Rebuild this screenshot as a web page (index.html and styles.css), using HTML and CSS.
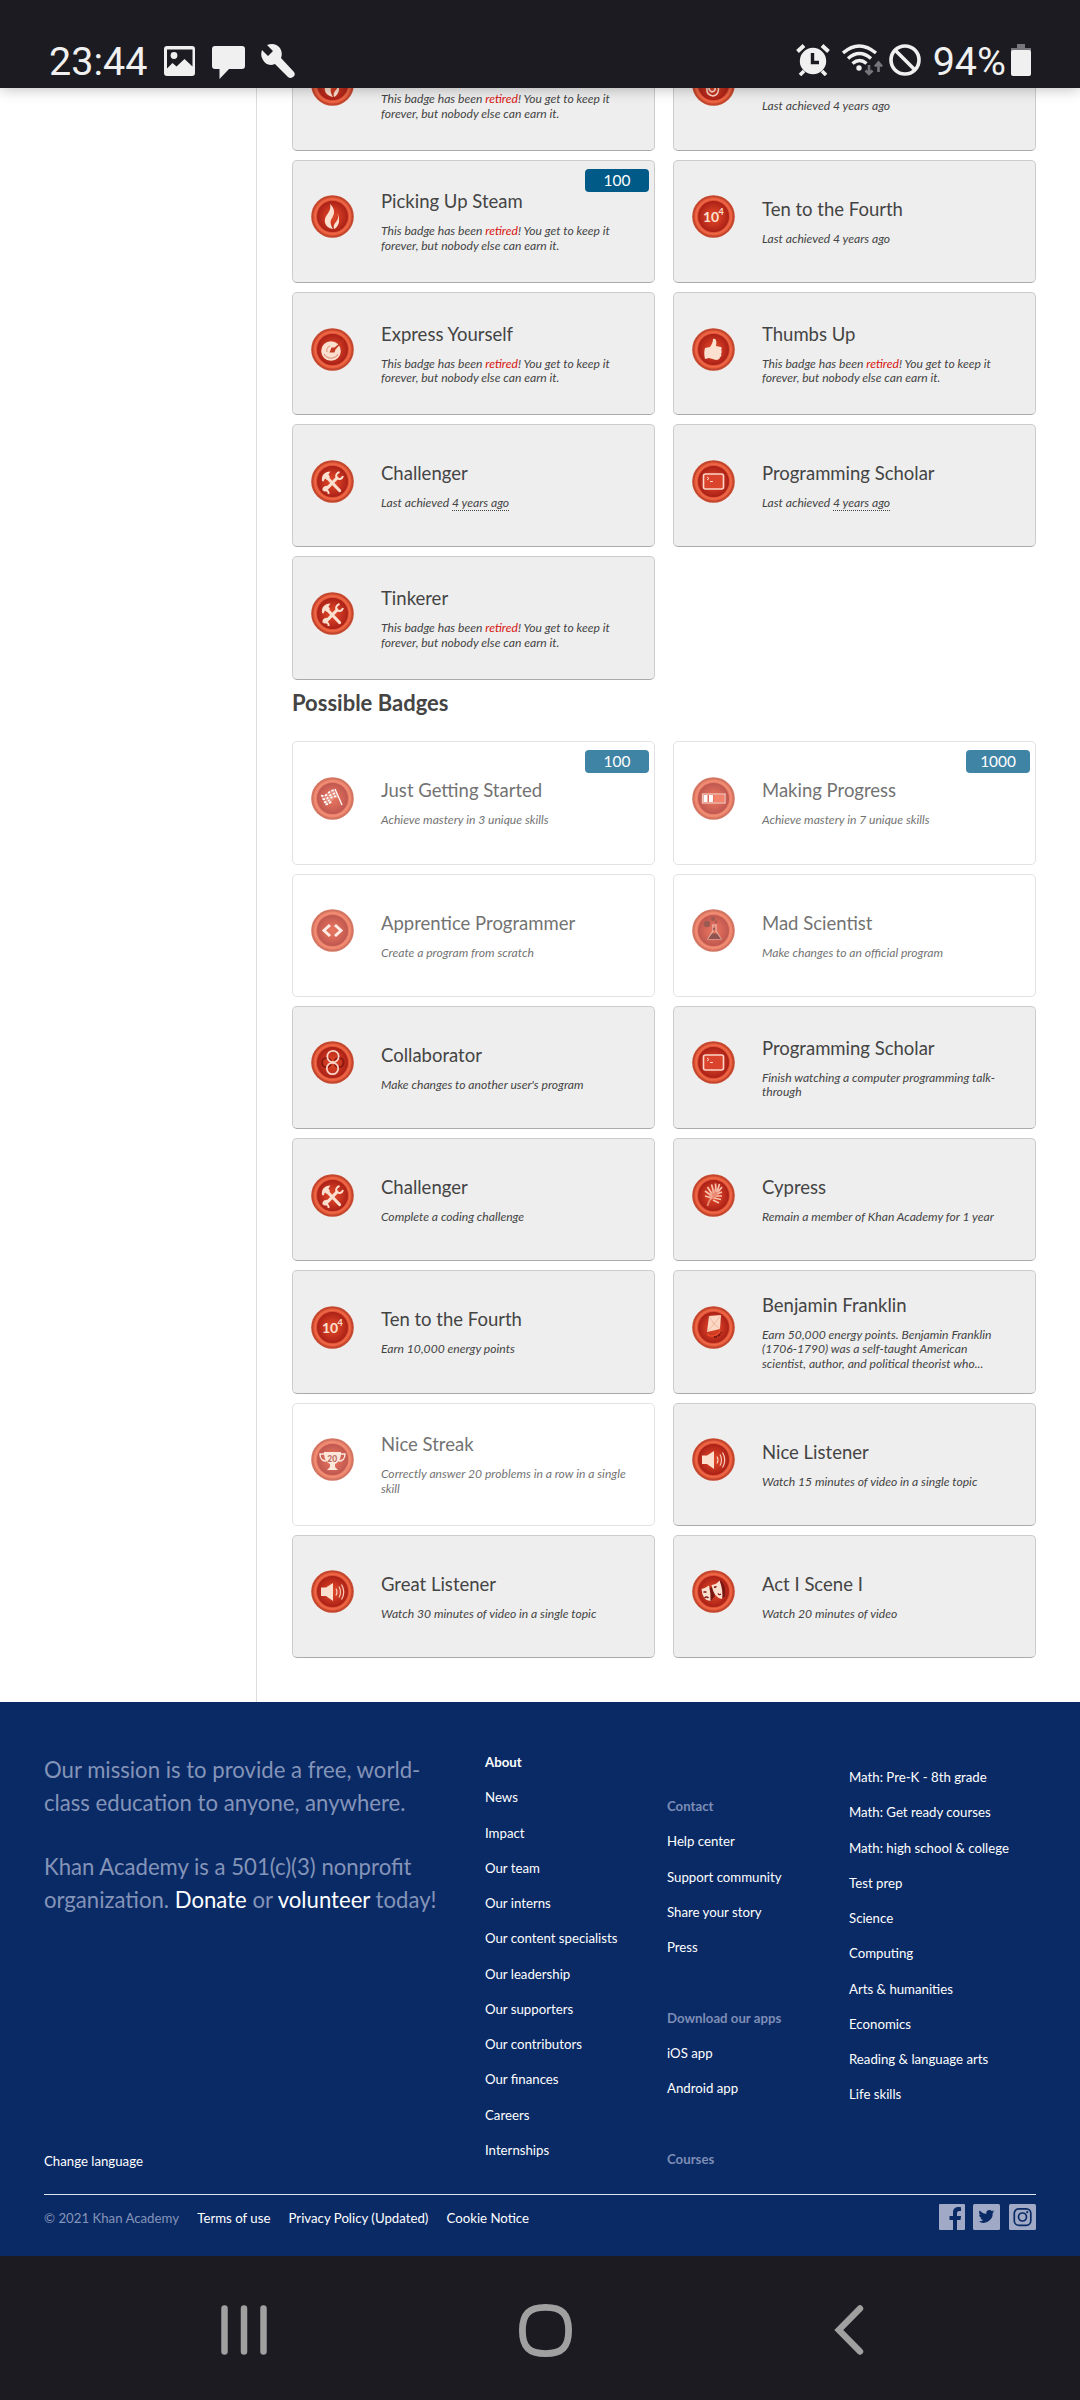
FILE: index.html
```html
<!DOCTYPE html>
<html lang="en">
<head>
<meta charset="utf-8">
<title>Badges | Khan Academy</title>
<link rel="stylesheet" href="styles.css">
</head>
<body>
<svg class="defs" width="0" height="0" aria-hidden="true">
  <defs>
    <radialGradient id="core"><stop offset="0" stop-color="#e04a2a"/><stop offset=".5" stop-color="#cc3721"/><stop offset="1" stop-color="#ab2117"/></radialGradient>
    <radialGradient id="ring"><stop offset=".72" stop-color="#d14328"/><stop offset=".8" stop-color="#ef6848"/><stop offset=".87" stop-color="#e85b3b"/><stop offset=".92" stop-color="#c0452c"/><stop offset="1" stop-color="#c94a30"/></radialGradient>
  </defs>
  <symbol id="medal" viewBox="0 0 43 43"><circle cx="21.5" cy="21.5" r="21.3" fill="url(#ring)"/><circle cx="21.5" cy="21.5" r="15.4" fill="url(#core)"/></symbol>
  <symbol id="flame" viewBox="0 0 43 43"><path d="M19 9c5 5 5 9 2 14-2 3-2 6 1 11-6-1-9-5-8-10 1-5 7-8 5-15z"/><path d="M26 18c2 4 1 6-1 9-2 2-3 4-2 7 3-1 5-5 5-8 0-3 0-5-2-8z"/></symbol>
  <symbol id="gauge" viewBox="0 0 43 43"><circle cx="20" cy="23" r="9.8"/><path d="M13 26a8 8 0 0 0 14 0M19 18a5 5 0 0 0-3 6" fill="none" stroke="#e09b84" stroke-width="1.2"/><path d="M18.500 24.500l2-5 3 0 11-9-10 11-1 3z" fill="#c43a22"/></symbol>
  <symbol id="thumb" viewBox="0 0 43 43"><path d="M13 20l5-1c2-3 3-5 3-8 3-1 4 2 3 7l5 1c1 1 1 2 0 3 1 1 1 2 0 4 1 1 0 3-1 3 0 2-2 3-4 3l-7-2-4 1c-1-4-1-8 0-11z"/></symbol>
  <symbol id="tools" viewBox="0 0 43 43"><path d="M17 18.500L28.500 30.500M26 18L15 29.500" fill="none" stroke="#fbe0cf" stroke-width="3.200" stroke-linecap="round"/><path d="M11 21c-.5-6 2-9 8.500-9.500l-2 3 1.500 2.500-3 3-2-1.500-1.500 3z"/><path d="M28.500 12c-3 1-4 3.500-3 5.500 2 2.500 5.500 2 6.500-1.500M12.500 30.500c4-1 5.500 1 5 3.500M12.500 30.500c-.5-3 3-5 5.500-3" fill="none" stroke="#fbe0cf" stroke-width="2"/></symbol>
  <symbol id="screen" viewBox="0 0 43 43"><rect x="11.500" y="14" width="20" height="15" rx="2" fill="#db442c" stroke="#fbd5c8" stroke-width="1.600"/><path d="M15 17l2 1.500-2 1.500M18 21.500h3" fill="none" stroke="#fbd5c8" stroke-width="1"/></symbol>
  <symbol id="flag" viewBox="0 0 43 43"><path d="M24 12l7 16" fill="none" stroke="#fff" stroke-width="1.300"/><path d="M9.500 17.500q4 2 7-2t7-3.500l4 9q-4-1-6.500 3t-7 4z" fill="#fff" fill-opacity=".2"/><path d="M10 18.500q4 1.500 7-2t7-3M11.500 22q4 1 6.500-2.500t7.500-3M13 25q4 .5 6-3t7-2.500M14.500 27.500q4-.5 6-3.500" fill="none" stroke="#fff" stroke-width="1.700" stroke-dasharray="2.400 1.600"/></symbol>
  <symbol id="progress" viewBox="0 0 43 43"><rect x="10.500" y="17" width="22.500" height="9" fill="none" stroke="#f0b0a0" stroke-width="1.300"/><path d="M11.500 18h4v7h-4zM17 18h4v7h-4z" fill="#fff"/><path d="M22 18h10v7H22z" fill="#f05a3a"/></symbol>
  <symbol id="code" viewBox="0 0 43 43"><path d="M19 16l-6 5.500 6 5.500M24 16l6 5.500-6 5.500" fill="none" stroke="#ffe6dc" stroke-width="3"/></symbol>
  <symbol id="flask" viewBox="0 0 43 43"><path d="M20 16h5M21 16v6l-5 8h13l-5-8v-6" fill="none" stroke="#e4a294" stroke-width="1.200"/><path d="M20 24.500h5l4 5.500H16z" fill="#6c1c16"/><g fill="#7c241a"><circle cx="15" cy="15" r="3.300"/><circle cx="21" cy="10" r="2"/><circle cx="24" cy="13" r="1.200"/><circle cx="22" cy="20" r="1.200"/></g></symbol>
  <symbol id="rings" viewBox="0 0 43 43"><g fill="none"><circle cx="15.500" cy="21.500" r="4.600" stroke="#87170f" stroke-width="1.800"/><circle cx="28" cy="21.500" r="4.600" stroke="#87170f" stroke-width="1.800"/><circle cx="22" cy="15.500" r="5.700" stroke="#fbd5c8" stroke-width="1.700"/><circle cx="21.500" cy="27.500" r="5.700" stroke="#fbd5c8" stroke-width="1.700"/></g></symbol>
  <symbol id="leaf" viewBox="0 0 43 43"><path d="M15.500 32q1-5 5-10" fill="none" stroke="#e88a70" stroke-width="1.800"/><path d="M20 22l-7-5M20 24l-7-2M20 20l-4.500-7M22 19l-2.500-8.500M24 18l-.5-8.500M25 18l2.500-8M26 18l4-5M25 20l5-2M24 22l6 0M22 24l7 1.500M21 26l6 3" fill="none" stroke="#f7c3b0" stroke-width="1.700"/><path d="M17 20l5-5 5 2-3 7-6 2z" fill="#f0a58e" fill-opacity=".7"/></symbol>
  <symbol id="kite" viewBox="0 0 43 43"><path d="M17 10l12-1-1 14-13 3z" fill="#fbd9c5"/><path d="M17 10l5 8 6 5M29 9l-7 9-7 8" stroke="#efae94" stroke-width=".8" fill="none"/><path d="M15 28q5 5 13-2v-2" stroke="#f0502c" stroke-width="1.200" fill="none"/><path d="M22 31q5 0 7-5" stroke="#7a1a12" stroke-width="1.800" stroke-dasharray="3 1" fill="none"/></symbol>
  <symbol id="trophy" viewBox="0 0 43 43"><path d="M13 14h17c0 7-2 10-6 12v3l3 3H16l3-3v-3c-4-2-6-5-6-12z"/><path d="M14 16h-5c0 5 3 7 6 7M29 16h5c0 5-3 7-6 7" fill="none" stroke="#fbe0cf" stroke-width="1.500"/></symbol>
  <symbol id="sound" viewBox="0 0 43 43"><path d="M10 17.500h5l7-4.500v18l-7-5h-5z"/><path d="M25 18.500q2 3.500 0 7M28 16.500q3 5.500 0 11M30.500 14.500q4.500 7.500 0 15" fill="none" stroke="#f7cbb8" stroke-width="1.200"/></symbol>
  <symbol id="masks" viewBox="0 0 43 43"><path d="M17 18l4-1 2 9-5 6z" fill="#7a1711"/><path d="M28 10q7 5 5 17l-6 1z" fill="#7a1711"/><path d="M9.500 19q4-1 7.500-3.500 2 8 1.500 15.500-8 0-9-12z"/><path d="M19.500 15q5-.5 8-4.500 4 10 2.500 18.500-8-1-10.500-14z"/><path d="M11.500 22h3M12.500 28q2-2 4 0M22 17.500l2.500-1M26 23.500q1 2 3 .5" stroke="#7a1711" stroke-width="1.400" fill="none"/></symbol>
  <symbol id="spiral" viewBox="0 0 43 43"><path d="M23 24q1 4-3 5-3-1-3-4M26 22q2 10-5 11-7-1-6-8" fill="none" stroke="#fbd5c8" stroke-width="1.600"/></symbol>
</svg>

<header class="status">
  <span class="status-text">23:44</span>
  <svg class="s-image" width="31" height="30" viewBox="0 0 31 30"><path fill="#f0f0f0" fill-rule="evenodd" d="M3 0h25a3 3 0 0 1 3 3v24a3 3 0 0 1-3 3H3a3 3 0 0 1-3-3V3a3 3 0 0 1 3-3zm0 3.500v19L8.500 17l4 3.500L20.500 13l8 7.500v-17z"/><circle cx="10" cy="9.500" r="3.400" fill="#f0f0f0"/></svg>
  <svg class="s-chat" width="33" height="33" viewBox="0 0 33 33"><path fill="#f0f0f0" d="M3 0h27a3 3 0 0 1 3 3v17a3 3 0 0 1-3 3H17L7.500 33V23H3a3 3 0 0 1-3-3V3a3 3 0 0 1 3-3z"/></svg>
  <svg class="s-wrench" width="34" height="34" viewBox="0 0 34 34"><path fill="#f0f0f0" d="M6 1Q14-2 19 4q3 5 1 10l13 14q2 3-1 5-3 2-5 0L14 20Q6 23 2 16-1 12 1 6l6 6 5-5z"/></svg>
  <span class="spacer"></span>
  <svg class="s-alarm" width="34" height="32" viewBox="0 0 34 32"><path d="M1.500 7.500L8 1.500M32.500 7.500L26 1.500" stroke="#f0f0f0" stroke-width="4"/><path d="M8 27l-4 4M26 27l4 4" stroke="#f0f0f0" stroke-width="3.600"/><circle cx="17" cy="17" r="13.200" fill="#f0f0f0"/><path d="M16.500 9v9.500H23" stroke="#1c1b21" stroke-width="3.400" fill="none"/></svg>
  <svg class="s-wifi" width="41" height="32" viewBox="0 0 41 32"><g fill="none" stroke="#f0f0f0" stroke-width="3.400"><path d="M1 9q16-14 33 0"/><path d="M6 14.500q11.500-10 23 0"/><path d="M10.500 19.500q7-6 14 0"/></g><circle cx="17" cy="24" r="2.700" fill="#f0f0f0"/><path d="M27 21v9M23.500 26.500L27 30l3.500-3.500M36.500 28V18.500M33 22.500l3.500-4 3.500 4" fill="none" stroke="#77767c" stroke-width="2.600"/></svg>
  <svg class="s-block" width="32" height="32" viewBox="0 0 32 32"><circle cx="16" cy="16" r="14" fill="none" stroke="#f0f0f0" stroke-width="3.600"/><path d="M6 6l20 20" stroke="#f0f0f0" stroke-width="3.600"/></svg>
  <span class="status-text">94%</span>
  <svg class="s-battery" width="20" height="32" viewBox="0 0 20 32"><path fill="#77767c" d="M6 0h8v4h6v4H0V4h6z"/><rect y="6" width="20" height="26" rx="2" fill="#f0f0f0"/></svg>
</header>

<main class="page">
  <aside class="sidebar"></aside>
  <section class="content">
    <div class="grid">
      <article class="card"><svg class="medal"><use href="#medal"/><use href="#flame"/></svg><div class="info"><h3>&nbsp;</h3><p>This badge has been <b>retired</b>! You get to keep it forever, but nobody else can earn it.</p></div></article>
      <article class="card"><svg class="medal"><use href="#medal"/><use href="#spiral"/></svg><div class="info"><h3>&nbsp;</h3><p>Last achieved 4 years ago</p></div></article>
      <article class="card"><svg class="medal"><use href="#medal"/><use href="#flame"/></svg><div class="info"><h3>Picking Up Steam</h3><p>This badge has been <b>retired</b>! You get to keep it forever, but nobody else can earn it.</p></div><span class="points">100</span></article>
      <article class="card"><svg class="medal"><use href="#medal"/><text class="ten" x="11" y="27">10</text><text class="four" x="26.500" y="20">4</text></svg><div class="info"><h3>Ten to the Fourth</h3><p>Last achieved 4 years ago</p></div></article>
      <article class="card"><svg class="medal"><use href="#medal"/><use href="#gauge"/></svg><div class="info"><h3>Express Yourself</h3><p>This badge has been <b>retired</b>! You get to keep it forever, but nobody else can earn it.</p></div></article>
      <article class="card"><svg class="medal"><use href="#medal"/><use href="#thumb"/></svg><div class="info"><h3>Thumbs Up</h3><p>This badge has been <b>retired</b>! You get to keep it forever, but nobody else can earn it.</p></div></article>
      <article class="card"><svg class="medal"><use href="#medal"/><use href="#tools"/></svg><div class="info"><h3>Challenger</h3><p>Last achieved <span class="when">4 years ago</span></p></div></article>
      <article class="card"><svg class="medal"><use href="#medal"/><use href="#screen"/></svg><div class="info"><h3>Programming Scholar</h3><p>Last achieved <span class="when">4 years ago</span></p></div></article>
      <article class="card"><svg class="medal"><use href="#medal"/><use href="#tools"/></svg><div class="info"><h3>Tinkerer</h3><p>This badge has been <b>retired</b>! You get to keep it forever, but nobody else can earn it.</p></div></article>
    </div>
    <h2>Possible Badges</h2>
    <div class="grid">
      <article class="card muted"><svg class="medal"><use href="#medal"/><use href="#flag"/></svg><div class="info"><h3>Just Getting Started</h3><p>Achieve mastery in 3 unique skills</p></div><span class="points">100</span></article>
      <article class="card muted"><svg class="medal"><use href="#medal"/><use href="#progress"/></svg><div class="info"><h3>Making Progress</h3><p>Achieve mastery in 7 unique skills</p></div><span class="points">1000</span></article>
      <article class="card muted"><svg class="medal"><use href="#medal"/><use href="#code"/></svg><div class="info"><h3>Apprentice Programmer</h3><p>Create a program from scratch</p></div></article>
      <article class="card muted"><svg class="medal"><use href="#medal"/><use href="#flask"/></svg><div class="info"><h3>Mad Scientist</h3><p>Make changes to an official program</p></div></article>
      <article class="card"><svg class="medal"><use href="#medal"/><use href="#rings"/></svg><div class="info"><h3>Collaborator</h3><p>Make changes to another user's program</p></div></article>
      <article class="card"><svg class="medal"><use href="#medal"/><use href="#screen"/></svg><div class="info"><h3>Programming Scholar</h3><p>Finish watching a computer programming talk-through</p></div></article>
      <article class="card"><svg class="medal"><use href="#medal"/><use href="#tools"/></svg><div class="info"><h3>Challenger</h3><p>Complete a coding challenge</p></div></article>
      <article class="card"><svg class="medal"><use href="#medal"/><use href="#leaf"/></svg><div class="info"><h3>Cypress</h3><p>Remain a member of Khan Academy for 1 year</p></div></article>
      <article class="card"><svg class="medal"><use href="#medal"/><text class="ten" x="11" y="27">10</text><text class="four" x="26.500" y="20">4</text></svg><div class="info"><h3>Ten to the Fourth</h3><p>Earn 10,000 energy points</p></div></article>
      <article class="card"><svg class="medal"><use href="#medal"/><use href="#kite"/></svg><div class="info"><h3>Benjamin Franklin</h3><p>Earn 50,000 energy points. Benjamin Franklin (1706-1790) was a self-taught American scientist, author, and political theorist who...</p></div></article>
      <article class="card muted"><svg class="medal"><use href="#medal"/><use href="#trophy"/><text class="twenty" x="16.300" y="23.500">20</text></svg><div class="info"><h3>Nice Streak</h3><p>Correctly answer 20 problems in a row in a single skill</p></div></article>
      <article class="card"><svg class="medal"><use href="#medal"/><use href="#sound"/></svg><div class="info"><h3>Nice Listener</h3><p>Watch 15 minutes of video in a single topic</p></div></article>
      <article class="card"><svg class="medal"><use href="#medal"/><use href="#sound"/></svg><div class="info"><h3>Great Listener</h3><p>Watch 30 minutes of video in a single topic</p></div></article>
      <article class="card"><svg class="medal"><use href="#medal"/><use href="#masks"/></svg><div class="info"><h3>Act I Scene I</h3><p>Watch 20 minutes of video</p></div></article>
    </div>
  </section>
</main>

<footer class="footer">
  <div class="columns">
    <div class="mission">
      <p>Our mission is to provide a free, world-class education to anyone, anywhere.</p>
      <p>Khan Academy is a 501(c)(3) nonprofit organization. <a>Donate</a> or <a>volunteer</a> today!</p>
      <span class="language">Change language</span>
    </div>
    <ul class="about">
      <li class="current">About</li><li>News</li><li>Impact</li><li>Our team</li><li>Our interns</li><li>Our content specialists</li><li>Our leadership</li><li>Our supporters</li><li>Our contributors</li><li>Our finances</li><li>Careers</li><li>Internships</li>
    </ul>
    <ul class="contact">
      <li class="head">Contact</li><li>Help center</li><li>Support community</li><li>Share your story</li><li>Press</li>
      <li class="head gap">Download our apps</li><li>iOS app</li><li>Android app</li>
      <li class="head gap">Courses</li>
    </ul>
    <ul class="courses">
      <li>Math: Pre-K - 8th grade</li><li>Math: Get ready courses</li><li>Math: high school &amp; college</li><li>Test prep</li><li>Science</li><li>Computing</li><li>Arts &amp; humanities</li><li>Economics</li><li>Reading &amp; language arts</li><li>Life skills</li>
    </ul>
  </div>
  <div class="legal">
    <span class="copy">© 2021 Khan Academy</span><span>Terms of use</span><span>Privacy Policy (Updated)</span><span>Cookie Notice</span>
    <div class="social">
      <svg width="26" height="26" viewBox="0 0 26 26"><path fill="#a0aac6" d="M1 0h24a1 1 0 0 1 1 1v24a1 1 0 0 1-1 1h-7V16h3.500l.6-4H18V9.500C18 8 18.500 7 20.500 7H22V3.300C18 2.500 14 3.500 14 8.500V12h-3.500v4H14v10H1a1 1 0 0 1-1-1V1a1 1 0 0 1 1-1z"/></svg>
      <svg width="27" height="26" viewBox="0 0 27 26"><rect width="27" height="26" rx="1.500" fill="#a0aac6"/><path fill="#0a2a66" transform="translate(5.500 4.500) scale(.66)" d="M24 4.600a10 10 0 0 1-2.800.8A5 5 0 0 0 23.300 2.700a10 10 0 0 1-3.100 1.200A4.900 4.900 0 0 0 11.800 8.400 14 14 0 0 1 1.700 3.200 4.900 4.900 0 0 0 3.200 9.700 5 5 0 0 1 1 9.100a4.900 4.900 0 0 0 3.900 4.900 5 5 0 0 1-2.200.1 4.900 4.900 0 0 0 4.600 3.400A10 10 0 0 1 0 19.500 14 14 0 0 0 21.500 7 10 10 0 0 0 24 4.600z"/></svg>
      <svg width="27" height="26" viewBox="0 0 27 26"><rect width="27" height="26" rx="1.500" fill="#a0aac6"/><g fill="none" stroke="#0a2a66" stroke-width="1.700"><rect x="5.300" y="4.800" width="16.500" height="16.500" rx="4.500"/><circle cx="13.500" cy="13" r="4"/></g><circle cx="18.200" cy="8.200" r="1.100" fill="#0a2a66"/></svg>
    </div>
  </div>
</footer>

<nav class="navbar">
  <svg width="46" height="50" viewBox="0 0 46 50"><path d="M3.500 3.500v43M23 3.500v43M42.500 3.500v43" stroke="#a0a0a1" stroke-width="6.500" stroke-linecap="round"/></svg>
  <svg class="home" width="53" height="53" viewBox="0 0 53 53"><path d="M26.500 3.400C43 3.400 49.600 10 49.600 26.500S43 49.600 26.500 49.600 3.400 43 3.400 26.500 10 3.400 26.500 3.400z" fill="none" stroke="#a0a0a1" stroke-width="6.800"/></svg>
  <svg class="back" width="30" height="50" viewBox="0 0 30 50"><path d="M26 3.500L4.800 25 26 46.500" fill="none" stroke="#a0a0a1" stroke-width="6.400" stroke-linecap="round"/></svg>
</nav>
</body>
</html>
```
FILE: styles.css
```css
* { box-sizing: border-box; margin: 0; padding: 0; }
body { width: 1080px; height: 2400px; overflow: hidden; display: flex; flex-direction: column; background: #fff; font-family: Lato, sans-serif; color: #444; }
.defs { position: absolute; }

.status { position: relative; z-index: 1; flex: none; height: 88px; padding: 37px 49px 0 49px; display: flex; align-items: flex-start; background: #1c1b21; box-shadow: 0 0 14px rgba(0, 0, 0, .3); }
.status svg { flex: none; display: block; }
.status-text { font: 39.500px/50px Roboto, sans-serif; color: #f0f0f0; }
.spacer { flex: 1; }
.s-image { margin: 9px 0 0 17px; }
.s-chat { margin: 9px 0 0 17px; }
.s-wrench { margin: 7px 0 0 16px; }
.s-alarm { margin: 7px 12px 0 0; }
.s-wifi { margin: 7px 6px 0 0; }
.s-block { margin: 7px 12px 0 0; }
.s-battery { margin: 7px 0 0 5px; }

.page { flex: none; height: 1614px; display: flex; overflow: hidden; }
.sidebar { width: 257px; border-right: 1px solid #ddd; }
.content { width: 779px; padding-left: 35px; margin-top: -60.700px; }
.grid { display: grid; grid-template-columns: 363px 363px; column-gap: 18px; grid-auto-rows: 123.400px; row-gap: 8.860px; }
.card { position: relative; display: flex; align-items: center; padding-left: 18px; border: 1px solid #ccc; border-bottom-color: #aaa; border-radius: 5px; background: #eee; }
.medal { flex: none; width: 43px; height: 43px; margin: -9px 27px 0 0; fill: #fbe0cf; }
.ten { font: 700 14px Lato, sans-serif; }
.four { font: 700 9px Lato, sans-serif; }
.twenty { font: 900 8.500px Lato, sans-serif; fill: #a83a2c; }
.info { width: 250px; padding-top: 1px; }
.info h3 { font-size: 18.500px; line-height: 23px; font-weight: 400; white-space: nowrap; }
.info p { margin-top: 11px; font-size: 12.120px; line-height: 14.300px; font-style: italic; }
.info b { font-weight: 400; color: #d8120f; }
.when { border-bottom: 1px dotted #444; }
.points { position: absolute; top: 8px; right: 5px; width: 64px; height: 23px; border-radius: 4px; background: #005a88; color: #fff; font-size: 15.400px; line-height: 22px; text-align: center; }
.muted { background: #fff; border-color: #d9d9d9; opacity: .75; }
h2 { height: 61.600px; padding-top: 9px; font-size: 22px; line-height: 28px; }

.footer { flex: none; height: 554px; padding: 0 44px; background: #0a2a66; color: #fff; font-size: 13.220px; }
.columns { height: 493px; border-bottom: 1px solid #dfe4ee; display: grid; grid-template-columns: 441px 182px 182px 187px; }
.mission { display: flex; flex-direction: column; padding-top: 51px; color: #8494b8; }
.mission p { width: 398px; margin-bottom: 31px; font-size: 22.130px; line-height: 33px; }
.mission a { color: #fff; }
.language { margin-top: auto; padding-bottom: 24px; line-height: 18px; color: #fff; }
ul { list-style: none; line-height: 35.270px; white-space: nowrap; }
.about { padding-top: 43px; }
.contact { padding-top: 87px; }
.courses { padding-top: 58px; }
.current, .head { font-weight: 700; }
.head { color: #7d8db5; }
.gap { margin-top: 35.270px; }
.legal { display: flex; gap: 18.200px; padding-top: 9px; line-height: 28px; }
.copy { color: #8494b8; }
.social { display: flex; gap: 9px; margin-left: auto; }
.social svg { display: block; }
.social svg:first-child { margin-right: -1px; }

.navbar { flex: none; height: 144px; padding: 4px 0 0 221px; display: flex; align-items: center; background: #1c1b21; }
.home { margin-left: 252px; }
.back { margin-left: 262px; }
```
